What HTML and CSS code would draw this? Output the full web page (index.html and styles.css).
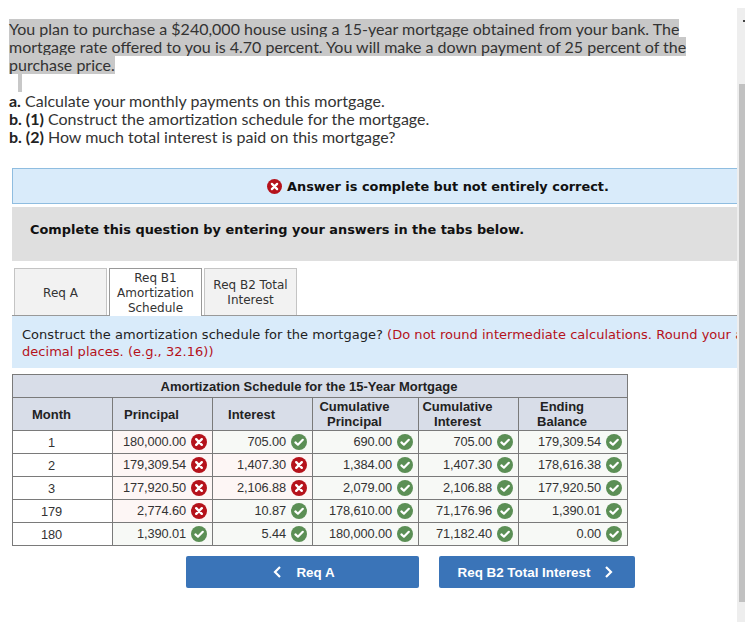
FILE: index.html
```html
<!DOCTYPE html>
<html lang="en">
<head>
<meta charset="utf-8">
<title>Amortization Schedule</title>
<link rel="stylesheet" href="styles.css">
</head>
<body>
<svg class="defs" width="0" height="0" aria-hidden="true">
  <symbol id="bad" viewBox="0 0 16 16"><circle cx="8" cy="8" r="8" fill="#b5121b"/><path d="M5.2 5.2l5.6 5.6M10.800 5.2l-5.600 5.600" stroke="#fff" stroke-width="2.400" stroke-linecap="round" fill="none"/></symbol>
  <symbol id="ok" viewBox="0 0 16 16"><circle cx="8" cy="8" r="8" fill="#5b8f55"/><path d="M4.400 8.400l2.500 2.300 4.900-4.900" stroke="#fff" stroke-width="2.200" stroke-linecap="round" stroke-linejoin="round" fill="none"/></symbol>
</svg>
<main class="page">
  <section class="question">
    <p class="intro"><mark>You plan to purchase a $240,000 house using a 15-year mortgage obtained from your bank. The<br>mortgage rate offered to you is 4.70 percent. You will make a down payment of 25 percent of the<br>purchase price. </mark><span class="caret"></span></p>
    <ol class="reqs">
      <li><b>a.</b> Calculate your monthly payments on this mortgage.</li>
      <li><b>b. (1)</b> Construct the amortization schedule for the mortgage.</li>
      <li><b>b. (2)</b> How much total interest is paid on this mortgage?</li>
    </ol>
  </section>
  <div class="banner"><svg class="icon"><use href="#bad"/></svg><strong>Answer is complete but not entirely correct.</strong></div>
  <div class="notice"><strong>Complete this question by entering your answers in the tabs below.</strong></div>
  <div class="tabs">
    <div class="tab">Req A</div>
    <div class="tab active">Req B1<br>Amortization<br>Schedule</div>
    <div class="tab">Req B2 Total<br>Interest</div>
  </div>
  <div class="panel">
    <p>Construct the amortization schedule for the mortgage? <span class="red">(Do not round intermediate calculations. Round your answers to 2<br>decimal places. (e.g., 32.16))</span></p>
  </div>
  <table class="sched">
    <colgroup><col class="c100"><col class="c100"><col class="c100"><col class="c106"><col class="c100"><col class="c109"></colgroup>
    <thead>
      <tr><th colspan="6" class="title">Amortization Schedule for the 15-Year Mortgage</th></tr>
      <tr class="heads"><th>Month</th><th>Principal</th><th>Interest</th><th>Cumulative<br>Principal</th><th>Cumulative<br>Interest</th><th>Ending<br>Balance</th></tr>
    </thead>
    <tbody>
      <tr><td class="m">1</td>
        <td class="w">180,000.00<svg><use href="#bad"/></svg></td><td class="g">705.00<svg><use href="#ok"/></svg></td><td class="g">690.00<svg><use href="#ok"/></svg></td><td class="g">705.00<svg><use href="#ok"/></svg></td><td class="g">179,309.54<svg><use href="#ok"/></svg></td></tr>
      <tr><td class="m">2</td>
        <td class="w">179,309.54<svg><use href="#bad"/></svg></td><td class="w">1,407.30<svg><use href="#bad"/></svg></td><td class="g">1,384.00<svg><use href="#ok"/></svg></td><td class="g">1,407.30<svg><use href="#ok"/></svg></td><td class="g">178,616.38<svg><use href="#ok"/></svg></td></tr>
      <tr><td class="m">3</td>
        <td class="w">177,920.50<svg><use href="#bad"/></svg></td><td class="w">2,106.88<svg><use href="#bad"/></svg></td><td class="g">2,079.00<svg><use href="#ok"/></svg></td><td class="g">2,106.88<svg><use href="#ok"/></svg></td><td class="g">177,920.50<svg><use href="#ok"/></svg></td></tr>
      <tr><td class="m">179</td>
        <td class="w">2,774.60<svg><use href="#bad"/></svg></td><td class="g">10.87<svg><use href="#ok"/></svg></td><td class="g">178,610.00<svg><use href="#ok"/></svg></td><td class="g">71,176.96<svg><use href="#ok"/></svg></td><td class="g">1,390.01<svg><use href="#ok"/></svg></td></tr>
      <tr><td class="m">180</td>
        <td class="g">1,390.01<svg><use href="#ok"/></svg></td><td class="g">5.44<svg><use href="#ok"/></svg></td><td class="g">180,000.00<svg><use href="#ok"/></svg></td><td class="g">71,182.40<svg><use href="#ok"/></svg></td><td class="g">0.00<svg><use href="#ok"/></svg></td></tr>
    </tbody>
  </table>
  <nav class="pager">
    <a class="btn prev"><svg viewBox="0 0 10 14"><path d="M8 2L3 7l5 5" stroke="#fff" stroke-width="2.200" fill="none"/></svg>Req A</a>
    <a class="btn next">Req B2 Total Interest<svg viewBox="0 0 10 14"><path d="M2 2l5 5-5 5" stroke="#fff" stroke-width="2.200" fill="none"/></svg></a>
  </nav>
</main>
<div class="scrollbar"><span class="arrow"></span><div class="thumb"></div></div>
</body>
</html>
```
FILE: styles.css
```css
html, body { margin: 0; padding: 0; height: 622px; overflow: hidden; background: #fff; }
.defs { position: absolute; }
.page { width: 745px; height: 622px; overflow: hidden; box-sizing: border-box; padding-top: 20px; font-family: "Liberation Sans", Arial, sans-serif; }
.question { padding-left: 9px; font-family: Lato, sans-serif; font-size: 16px; line-height: 18px; color: #333; }
.intro { margin: 0; height: 72px; position: relative; }
.intro mark { background: #c8c8c8; color: #333; }
.caret { position: absolute; left: 9px; top: 54px; width: 4px; height: 18px; background: #c8c8c8; }
.reqs { list-style: none; margin: 0; padding: 0; }
.reqs b { color: #222; }
.banner { margin: 22px 8px 0 12px; height: 34px; background: #d9ebfa; border: 1px solid #8fbde0; border-right: 0; display: flex; align-items: center; gap: 5px; padding-left: 254px; font-family: "DejaVu Sans", sans-serif; font-size: 12.900px; color: #111; }
.icon { width: 15px; height: 15px; }
.notice { margin: 3px 8px 0 12px; height: 54px; box-sizing: border-box; padding: 14px 18px 0; background: #dfdfdf; font-family: "DejaVu Sans", sans-serif; font-size: 12.900px; line-height: 18px; color: #111; }
.tabs { display: flex; gap: 2px; margin: 7px 8px 0 12px; padding-left: 2px; height: 47px; border-bottom: 1px solid #999; font-family: "DejaVu Sans", sans-serif; font-size: 12px; color: #333; }
.tab { width: 93px; box-sizing: border-box; height: 47px; padding-top: 2px; border: 1px solid #c4c4c4; border-bottom: 0; background: #f2f2f2; display: flex; align-items: center; justify-content: center; text-align: center; line-height: 15px; }
.tab.active { height: 48px; background: #fff; border: 1px solid #999; border-bottom: 0; position: relative; z-index: 1; }
.panel { margin: 0 8px 0 12px; height: 52px; overflow: hidden; background: #d9ebfa; padding: 10px 10px 0; box-sizing: border-box; font-family: "DejaVu Sans", sans-serif; font-size: 13px; letter-spacing: 0.030px; line-height: 17px; color: #222; }
.panel p { margin: 0; white-space: nowrap; }
.red { color: #b5121b; }
.sched { border-collapse: collapse; margin: 6px 0 0 12px; table-layout: fixed; width: 615px; font-size: 12.800px; letter-spacing: -0.100px; color: #333; }
.c100 { width: 100px; }
.c106 { width: 106px; }
.c109 { width: 109px; }
.sched th, .sched td { border: 1px solid #7a7a7a; padding: 0; }
.sched th { background: #d8dde8; font-size: 13px; letter-spacing: 0; font-weight: 700; line-height: 15px; color: #222; text-align: center; padding-right: 22px; }
.title { height: 22px; }
.heads th { height: 32px; }
.sched td { height: 23px; text-align: right; padding-right: 5px; box-sizing: border-box; }
.sched td svg { width: 16px; height: 16px; margin-left: 5px; vertical-align: -4px; }
.sched td.m { text-align: center; padding-right: 22px; background: #fff; }
.w { background: #fdf6f5; }
.g { background: #f7f9f6; }
.pager { display: flex; gap: 20px; margin: 10px 0 0 186px; }
.btn { height: 32px; box-sizing: border-box; background: #3a74b8; border-radius: 2px; color: #fff; font-size: 13.400px; font-weight: 700; display: flex; align-items: center; justify-content: center; }
.btn svg { width: 10px; height: 14px; }
.prev { width: 233px; gap: 14px; padding-left: 2px; }
.next { width: 196px; gap: 14px; padding-right: 2px; }
.scrollbar { position: absolute; top: 8px; right: 0; width: 8px; height: 614px; background: #eeeeee; }
.arrow { position: absolute; top: 12px; right: 0; width: 2px; height: 2px; background: #444; }
.thumb { margin: 76px 0 0 2px; height: 518px; background: #c1c1c1; }
```
